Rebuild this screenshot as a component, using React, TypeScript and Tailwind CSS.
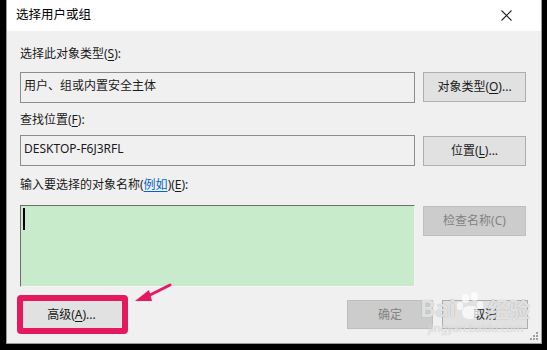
import React from "react";

const U = ({ c }: { c: string }) => <span className="underline underline-offset-[2px]">{c}</span>;

export default function App() {
  return (
    <div className="w-[547px] h-[350px] bg-black pl-[6px] pr-[5px] pb-[6px] font-['Noto_Sans','Noto_Sans_CJK_SC',sans-serif] text-[12px] text-[#1a1a1a] overflow-hidden">
      <div className="relative flex flex-col h-full border-x border-b border-[#9a9a9a]">
        {/* title bar */}
        <div className="h-[31px] bg-white flex items-center justify-between pl-[9px] pr-[29px] text-[12.5px] text-black">
          <span className="leading-none">选择用户或组</span>
          <svg width="11" height="11" viewBox="0 0 11 11" className="mt-[-1px]">
            <path d="M0.5 0.5 L10.5 10.5 M10.5 0.5 L0.5 10.5" stroke="#222" strokeWidth="1.1" />
          </svg>
        </div>
        {/* body */}
        <div className="flex-1 bg-[#f0f0f0] pl-[13px] pr-[13px] pt-[15px] flex flex-col">
          <div className="h-[16px] leading-[16px]">选择此对象类型(<U c="S" />):</div>
          <div className="mt-[10px] flex gap-[8px]">
            <div className="w-[395px] h-[31px] border border-[#8c8c8c] bg-[#f0f0f0] pl-[3px] pt-[3px] leading-[20px]">用户、组或内置安全主体</div>
            <button className="w-[103px] h-[30px] border border-[#adadad] bg-[#e1e1e1] leading-none">对象类型(<U c="O" />)...</button>
          </div>
          <div className="mt-[9px] h-[16px] leading-[16px]">查找位置(<U c="F" />):</div>
          <div className="mt-[7px] flex gap-[8px]">
            <div className="w-[395px] h-[31px] border border-[#8c8c8c] bg-[#f0f0f0] pl-[3px] pt-[3px] leading-[20px]">DESKTOP-F6J3RFL</div>
            <button className="mt-[1px] w-[103px] h-[30px] border border-[#adadad] bg-[#e1e1e1] leading-none">位置(<U c="L" />)...</button>
          </div>
          <div className="mt-[11px] h-[16px] leading-[16px]">
            输入要选择的对象名称(<span className="text-[#0066cc] underline underline-offset-[2px]">例如</span>)(<U c="E" />):
          </div>
          <div className="mt-[12px] flex gap-[8px] items-start">
            <div className="w-[395px] h-[82px] bg-[#c8ebcb] border-t border-l border-[#6e6e6e] border-r border-b border-r-[#f4f4f4] border-b-[#f4f4f4] pl-[2px] pt-[2px]">
              <div className="w-[2px] h-[22px] bg-black" />
            </div>
            <button className="mt-[1px] w-[103px] h-[30px] border border-[#bfbfbf] bg-[#cccccc] text-[#838383] leading-none">检查名称(C)</button>
          </div>
          <div className="mt-[13px] flex items-start">
            <button className="w-[103px] h-[29px] border border-[#adadad] bg-[#e1e1e1] leading-none">高级(<U c="A" />)...</button>
            <div className="flex-1" />
            <button className="w-[86px] h-[29px] border border-[#bfbfbf] bg-[#cccccc] text-[#838383] leading-none">确定</button>
            <button className="ml-[9px] w-[86px] h-[29px] border border-[#adadad] bg-[#e1e1e1] leading-none">取消</button>
          </div>
        </div>

        {/* pink highlight annotation */}
        <div className="absolute left-[10px] top-[295px] w-[111px] h-[39px] border-[6px] border-[#e5195f] rounded-[4px]" />
        <svg className="absolute left-[125px] top-[282px]" width="45" height="24" viewBox="0 0 45 24">
          <path d="M38 3 L14 15" stroke="#e5195f" strokeWidth="3" strokeLinecap="round" />
          <path d="M3 19 L17 8 L20 19 Z" fill="#e5195f" />
        </svg>

        {/* Baidu watermark */}
        <div className="absolute left-[413px] top-[296px] pointer-events-none flex flex-col items-start">
          <div className="relative flex items-end text-[23px] font-bold leading-none text-white/70 [text-shadow:0_0_1px_#9a9a9a]">
            <span>Bai</span>
            <span className="relative w-[30px] h-[24px]">
              <span className="absolute left-[6px] top-[-2px] w-[7px] h-[9px] rounded-full bg-white/70" />
              <span className="absolute left-[15px] top-[-4px] w-[7px] h-[9px] rounded-full bg-white/70" />
              <span className="absolute left-[1px] top-[6px] w-[6px] h-[8px] rounded-full bg-white/70" />
              <span className="absolute left-[21px] top-[5px] w-[6px] h-[8px] rounded-full bg-white/70" />
              <span className="absolute left-[6px] top-[10px] w-[17px] h-[13px] rounded-full bg-white/70" />
            </span>
            <span className="text-[21px] ml-[2px]">经验</span>
          </div>
          <div className="ml-[8px] mt-[2px] text-[11px] leading-none text-white/60 [text-shadow:0_0_1px_#b0b0b0]">jingyan.baidu.com</div>
        </div>

        {/* resize grip */}
        <svg className="absolute right-[3px] bottom-[3px]" width="8" height="8" viewBox="0 0 8 8">
          <rect x="6" y="0" width="2" height="2" fill="#a0a0a0" />
          <rect x="3" y="3" width="2" height="2" fill="#a0a0a0" />
          <rect x="6" y="3" width="2" height="2" fill="#a0a0a0" />
          <rect x="0" y="6" width="2" height="2" fill="#a0a0a0" />
          <rect x="3" y="6" width="2" height="2" fill="#a0a0a0" />
          <rect x="6" y="6" width="2" height="2" fill="#a0a0a0" />
        </svg>
      </div>
    </div>
  );
}
